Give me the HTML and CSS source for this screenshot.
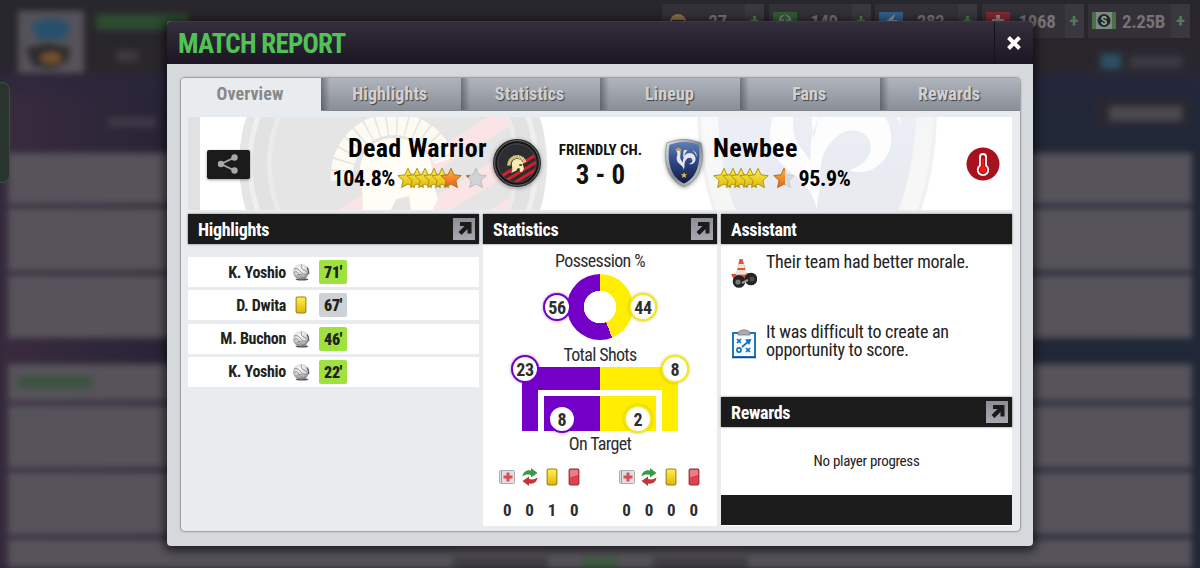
FILE: index.html
```html
<!DOCTYPE html>
<html>
	<head>
		<meta charset="UTF-8">
		<title>Match Report</title>
		<link rel="stylesheet" href="styles.css">
	</head>
	<body>
		<svg class="defs" width="0" height="0">
			<defs>
				<linearGradient id="gold" x1="0" y1="0" x2="0" y2="1"><stop offset="0" stop-color="#fff04a"/><stop offset="1" stop-color="#dfb80f"/></linearGradient>
				<linearGradient id="orange" x1="0" y1="0" x2="0" y2="1"><stop offset="0" stop-color="#ffb43c"/><stop offset="1" stop-color="#e2641c"/></linearGradient>
				<linearGradient id="blue" x1="0" y1="0" x2="0" y2="1"><stop offset="0" stop-color="#5f7fb8"/><stop offset=".5" stop-color="#2c4482"/><stop offset="1" stop-color="#101c40"/></linearGradient>
				<linearGradient id="silver" x1="0" y1="0" x2="1" y2="1"><stop offset="0" stop-color="#e8ebee"/><stop offset=".5" stop-color="#85898f"/><stop offset="1" stop-color="#d5d8dc"/></linearGradient>
				<radialGradient id="leather" cx=".45" cy=".3" r=".7"><stop offset="0" stop-color="#fff"/><stop offset=".6" stop-color="#d3d5d8"/><stop offset="1" stop-color="#77797d"/></radialGradient>
				<clipPath id="disc"><circle cx="24" cy="24" r="19"/></clipPath>
				<clipPath id="half"><rect x="0" y="0" width="12" height="22"/></clipPath>
				<path id="starShape" d="M11 .8l3 6.500 7.200.8-5.300 4.900 1.500 7.100-6.400-3.600-6.400 3.600 1.500-7.100L.8 8.100l7.200-.8z"/>
			</defs>
			<symbol id="warrior" viewBox="0 0 48 48">
				<circle cx="24" cy="24" r="24" fill="#2b2b2d"/>
				<circle cx="24" cy="24" r="22.300" fill="#151516" stroke="#77787a" stroke-width=".8"/>
				<circle cx="24" cy="24" r="19.300" fill="#2c2d2f" stroke="#5d5e60" stroke-width=".7"/>
				<g clip-path="url(#disc)" stroke="#d3202c" stroke-width="3">
					<path d="M4 40L46 14M9 44L50 19M16 47L52 25"/>
				</g>
				<path d="M16 26.500a8.200 8.200 0 0 1 16-3" fill="none" stroke="#efd98c" stroke-width="3.400" stroke-dasharray="1.300 .25"/>
				<path d="M19 27c-1-5 2.500-7.500 6-7 3.500.5 5.500 3 5 6l1 3.500-1.500 3-2.500.5-.5-4-2 .5-1 2-5.500 2.500c1.500-2 1.500-4 1-7z" fill="#f8ebb4"/>
				<path d="M26 25.500l3.500-.5-.8 1.800-2.200.3z" fill="#2c2d2f"/>
			</symbol>
			<symbol id="newbee" viewBox="0 0 38 48">
				<path d="M19 .5c6 0 11 1.400 17 3.500 2 8 2 18-1 27C32 39 26 45 19 47.500 12 45 6 39 3 31 0 22 0 12 2 4 8 1.900 13 .5 19 .5z" fill="url(#silver)" stroke="#777b80" stroke-width=".6"/>
				<path d="M19 3c5.500 0 10 1.200 14.500 2.800 1.500 7.500 1.300 16-1.300 24C29.500 37 25 42 19 44.500 13 42 8.500 37 5.800 29.800 3.200 21.800 3 13.300 4.500 5.800 9 4.200 13.500 3 19 3z" fill="url(#blue)"/>
				<path d="M11 10.500c3-2 5 0 4.500 2.500 0 4-1 6 1 8.500 2 2.500 3 4 2.500 9.500-1-4-3-4.500-5.500-7-3-3.500-1.500-6.500-1-9z" fill="#e6e8ee"/>
				<path d="M12 12l-2-2 2.500-.3.5-1.700 2 1.700 1.500.3-1 2z" fill="#c9a552"/>
				<path d="M18 22c0-5 3-8 7-8s6 4 5.500 7c-.5 3-3.500 5-6.500 4 3-1 4-3 3-5-2-2.500-5.500-1-7 2.500-1 3 0 5-1 7-1-2-1-4-1-7.500zM19 11c-1 3-1 7-.5 9 1-4 1.500-7 4-9zM27 11c3 1 5 3.500 5 7-1-3-2.500-5-5-7z" fill="#e6e8ee"/>
				<path d="M19 33l.9 2.200 2.400.1-1.900 1.500.7 2.300-2.100-1.300-2.100 1.300.7-2.300-1.900-1.500 2.400-.1z" fill="#e0b93f"/>
			</symbol>
			<symbol id="star" viewBox="0 0 22 22"><use href="#starShape" fill="url(#gold)" stroke="#a88a12" stroke-width=".9"/></symbol>
			<symbol id="starOrange" viewBox="0 0 22 22"><use href="#starShape" fill="url(#orange)" stroke="#b06a1c" stroke-width=".9"/></symbol>
			<symbol id="starEmpty" viewBox="0 0 22 22"><use href="#starShape" fill="#d3d2d6" stroke="#b9b8bd" stroke-width=".9"/><path d="M.8 8.100L5 7.600l-1.800 3z" fill="#b06a1c"/></symbol>
			<symbol id="starHalf" viewBox="0 0 22 22"><use href="#starShape" fill="#d5dadd" stroke="#c5cbd0" stroke-width=".9"/><g clip-path="url(#half)"><use href="#starShape" fill="url(#orange)" stroke="#b06a1c" stroke-width=".9"/></g></symbol>
			<symbol id="ball" viewBox="0 0 18 18">
				<ellipse cx="10" cy="16.300" rx="6.500" ry="1.200" fill="#555"/>
				<circle cx="9" cy="8.700" r="7.900" fill="url(#leather)"/>
				<path d="M2 6c3-1 5 0 6.500 2.500S12 12 15.500 11M9.500 1.500c-1 3 0 4.500 2.500 5.500s4 2 4.300 4M1.500 10c2-2 4-1.500 5 .5s2.500 4.500 6 4.500M5 12.500c2-1.500 4-1.500 6 0" fill="none" stroke="#85878b" stroke-width=".9"/>
				<path d="M15 4.500c1.700 2 2 4 1.700 6.500" fill="none" stroke="#4c6476" stroke-width="1.300"/>
			</symbol>
			<symbol id="yellow" viewBox="0 0 12 18"><rect x=".6" y=".6" width="10.800" height="16.800" rx="1.800" fill="#9a7a18"/><rect x="1.600" y="1.400" width="8.800" height="15" rx="1" fill="url(#gold)"/></symbol>
			<symbol id="red" viewBox="0 0 12 18"><rect x=".6" y=".6" width="10.800" height="16.800" rx="1.800" fill="#a02a35"/><rect x="1.600" y="1.400" width="8.800" height="15" rx="1" fill="#dd4254"/><path d="M2 2h8v5L2 9z" fill="#e8808a"/></symbol>
			<symbol id="injury" viewBox="0 0 16 16"><rect x=".5" y="1.500" width="15" height="13" rx="1" fill="#dfe0e3" stroke="#aaacb1"/><path d="M2.500 2v12" stroke="#999ba0"/><path d="M7.500 3.500h3v3h3v3h-3v3h-3v-3h-3v-3h3z" fill="#dd4b55"/></symbol>
			<symbol id="subs" viewBox="0 0 16 18"><path d="M.5 8.500C1 4 4.500 1.500 9 2.500V0l6.500 5L9 9.500V7C6 6 3.500 6.500.5 8.500z" fill="#3a9a47"/><path d="M15.500 9.500c-.5 4.500-4 7-8.500 6V18L.5 13 7 8.500V11c3 1 5.500.5 8.500-1.500z" fill="#c5343a"/></symbol>
			<symbol id="open" viewBox="0 0 22 22"><path d="M7 4h11.500v11.500h-4V11L8.500 17 5.500 14l6-6H7z" fill="#1b1b1b"/></symbol>
		</svg>

		<!-- page behind the dialog -->
		<div class="page">
			<div class="top">
				<svg class="team" viewBox="0 0 70 66"><rect width="70" height="66" fill="#55535a"/><path d="M14 14q20-12 42 0l-6 16H20z" fill="#28506c"/><path d="M8 40l24-6 24 6-4 14-16 8-20-4z" fill="#2c2a2c"/><ellipse cx="35" cy="50" rx="12" ry="7" fill="#75502f"/></svg>
				<div class="name">
					<i class="line green"></i>
					<i class="line arrow"></i>
					<i class="line text"></i>
				</div>
				<div class="side">
					<i class="btn"><b></b></i>
					<i class="btn plain"></i>
				</div>
			</div>
			<div class="rows">
				<i class="row first"></i>
				<i class="row"></i>
				<i class="row"></i>
				<i class="row title"><b></b></i>
				<i class="row"></i>
				<i class="row"></i>
				<i class="row last"><b></b><b class="g"></b><b></b></i>
			</div>
		</div>
		<div class="drawer"></div>
		<ul class="wallet">
			<li><svg viewBox="0 0 24 18"><circle cx="12" cy="10" r="8" fill="#8b7048"/><path d="M6 8h12v3h-4v6h-4v-6H6z" fill="#2b272b"/></svg><span>27</span><em>+</em></li>
			<li><svg viewBox="0 0 24 18"><rect width="24" height="17" fill="#315c33"/><circle cx="12" cy="9" r="6.500" fill="#768178"/><path d="M12 4v10M9 7l3-3 3 3" stroke="#315c33" stroke-width="2" fill="none"/></svg><span>149</span><em>+</em></li>
			<li><svg viewBox="0 0 24 18"><rect width="24" height="17" fill="#315f8a"/><path d="M16 2L6 10h5l-2 6 10-8h-5z" fill="#8b98a4"/></svg><span>282</span><em>+</em></li>
			<li><svg viewBox="0 0 24 18"><rect width="24" height="17" fill="#7f292f"/><path d="M10 3h4v4h4v4h-4v4h-4v-4H6V7h4z" fill="#978689"/></svg><span>1968</span><em>+</em></li>
			<li><svg viewBox="0 0 24 18"><rect width="24" height="17" fill="#496f4c"/><rect x="4" width="16" height="17" fill="#7c8b7f"/><circle cx="12" cy="8.500" r="6.500" fill="#20282a"/><text x="12" y="12.700" text-anchor="middle" font-size="12" font-weight="bold" fill="#98a49b">S</text></svg><span>2.25B</span><em>+</em></li>
		</ul>

		<div class="dialog">
			<div class="bar">
				<h1>MATCH REPORT</h1>
				<div class="close"><svg width="16" height="16" viewBox="0 0 16 16"><path d="M2.500 2.500l11 11M13.500 2.500l-11 11" stroke="#fff" stroke-width="4"/></svg></div>
			</div>
			<div class="panel">
				<ul class="tabs">
					<li class="active">Overview</li>
					<li>Highlights</li>
					<li>Statistics</li>
					<li>Lineup</li>
					<li>Fans</li>
					<li>Rewards</li>
				</ul>
				<div class="content">
					<div class="match">
						<svg class="mark mark1"><use href="#warrior"/></svg>
						<svg class="mark mark2"><use href="#newbee"/></svg>
						<div class="share"><svg width="22" height="20" viewBox="0 0 22 20"><path d="M17.500 3.500L4 10l13.500 6.500" fill="none" stroke="#aaa" stroke-width="1.800"/><circle cx="17.500" cy="3.500" r="3.200" fill="#aaa"/><circle cx="4" cy="10" r="3.200" fill="#aaa"/><circle cx="17.500" cy="16.500" r="3.200" fill="#aaa"/></svg></div>
						<div class="club home">
							<h2>Dead Warrior</h2>
							<div class="rate">
								<span>104.8%</span>
								<div class="stars">
									<svg><use href="#star"/></svg><svg><use href="#star"/></svg><svg><use href="#star"/></svg><svg><use href="#star"/></svg><svg><use href="#star"/></svg><svg><use href="#starOrange"/></svg><svg class="apart"><use href="#starEmpty"/></svg>
								</div>
							</div>
						</div>
						<svg class="crest round"><use href="#warrior"/></svg>
						<div class="score">
							<p>FRIENDLY CH.</p>
							<strong>3 - 0</strong>
						</div>
						<svg class="crest shield"><use href="#newbee"/></svg>
						<div class="club away">
							<h2>Newbee</h2>
							<div class="rate">
								<div class="stars">
									<svg><use href="#star"/></svg><svg><use href="#star"/></svg><svg><use href="#star"/></svg><svg><use href="#star"/></svg><svg><use href="#star"/></svg><svg class="apart"><use href="#starHalf"/></svg>
								</div>
								<span>95.9%</span>
							</div>
						</div>
						<div class="temp"><svg width="34" height="34" viewBox="0 0 34 34"><circle cx="17" cy="17" r="16.500" fill="#a81220"/><path d="M14 18.500V10a3 3 0 0 1 6 0v8.500a5.300 5.300 0 1 1-6 0z" fill="#a81220" stroke="#fff" stroke-width="1.800"/><circle cx="17" cy="22.500" r="3.300" fill="#ff1414"/><path d="M17 12v9" stroke="#ff1414" stroke-width="2"/></svg></div>
					</div>

					<div class="cols">
						<div class="col events">
							<h3>Highlights<span class="open"><svg><use href="#open"/></svg></span></h3>
							<ul>
								<li><p>K. Yoshio</p><svg class="ball"><use href="#ball"/></svg><b>71'</b></li>
								<li><p>D. Dwita</p><svg class="card"><use href="#yellow"/></svg><b class="grey">67'</b></li>
								<li><p>M. Buchon</p><svg class="ball"><use href="#ball"/></svg><b>46'</b></li>
								<li><p>K. Yoshio</p><svg class="ball"><use href="#ball"/></svg><b>22'</b></li>
							</ul>
						</div>

						<div class="col stats">
							<h3>Statistics<span class="open"><svg><use href="#open"/></svg></span></h3>
							<p class="label">Possession %</p>
							<div class="possession">
								<span class="num purple">56</span>
								<div class="donut"></div>
								<span class="num gold">44</span>
							</div>
							<p class="label shots">Total Shots</p>
							<div class="goal">
								<div class="inner"></div>
								<span class="num purple n1">23</span>
								<span class="num gold n2">8</span>
								<span class="num purple n3">8</span>
								<span class="num gold n4">2</span>
							</div>
							<p class="label target">On Target</p>
							<div class="counts">
								<ul>
									<li><svg><use href="#injury"/></svg>0</li>
									<li><svg><use href="#subs"/></svg>0</li>
									<li><svg><use href="#yellow"/></svg>1</li>
									<li><svg><use href="#red"/></svg>0</li>
								</ul>
								<ul>
									<li><svg><use href="#injury"/></svg>0</li>
									<li><svg><use href="#subs"/></svg>0</li>
									<li><svg><use href="#yellow"/></svg>0</li>
									<li><svg><use href="#red"/></svg>0</li>
								</ul>
							</div>
						</div>

						<div class="col notes">
							<h3>Assistant</h3>
							<div class="tips">
								<div class="tip">
									<svg width="26" height="30" viewBox="0 0 26 30"><path d="M0 15l18-1 5 3-8 5-12-1z" fill="#d8552f"/><path d="M8.500 0h3L16 16H5z" fill="#e0562f"/><path d="M7.700 5h5l1.200 4H6.500zM5.700 11h9l1 4.500-11 .2z" fill="#e9e3df"/><circle cx="8" cy="22.500" r="6.300" fill="#242426"/><circle cx="20" cy="20" r="6.300" fill="#242426"/><circle cx="7" cy="23" r="2.600" fill="#77787b"/><circle cx="21" cy="20" r="2.500" fill="#4d4e51"/><path d="M11 24l6-3" stroke="#999" stroke-width="2"/></svg>
									<p>Their team had better morale.</p>
								</div>
								<div class="tip">
									<svg width="26" height="30" viewBox="0 0 26 30"><rect x="2" y="4" width="22" height="24" fill="#f4fafd" stroke="#2277b8" stroke-width="2"/><path d="M1 28.500h24" stroke="#154f80" stroke-width="1.500"/><path d="M7 6V3q6-4.500 12 0v3z" fill="#a9adb1" stroke="#6f7478" stroke-width=".7"/><path d="M6 10l4 4m0-4l-4 4M15 19l4 4m0-4l-4 4M11 18l7-6" stroke="#1470ba" stroke-width="1.700"/><path d="M14 10.500l6.500-.5-2.500 6z" fill="#1470ba"/><circle cx="8" cy="21" r="2.100" fill="none" stroke="#1470ba" stroke-width="1.600"/></svg>
									<p>It was difficult to create an opportunity to score.</p>
								</div>
							</div>
							<h3 class="second">Rewards<span class="open"><svg><use href="#open"/></svg></span></h3>
							<p class="none">No player progress</p>
							<div class="foot"></div>
						</div>
					</div>
				</div>
			</div>
		</div>
	</body>
</html>
```

FILE: styles.css
```css
*{margin:0;padding:0;box-sizing:border-box;}
body{
	width:1200px;
	height:568px;
	overflow:hidden;
	position:relative;
	background:#252936;
	font-family:"Liberation Sans Narrow","Roboto Condensed","Liberation Sans",sans-serif;
}
ul{list-style:none;}
i,em{font-style:normal;}
svg{display:block;flex:none;}
.defs{position:absolute;}

/* page behind */
.page{
	width:1200px;
	height:568px;
	overflow:hidden;
	filter:blur(3px);
	background:linear-gradient(90deg,#3a2b3e 0,#292537 12%,#242837 60%,#202737 100%);
}
.top{
	height:153px;
	padding:10px 8px 0 18px;
	display:flex;
	background:linear-gradient(#29262b 0,#29262b 68px,rgba(42,38,62,.6) 78px,rgba(42,38,62,0) 110px);
}
.team{width:66px;height:64px;}
.name{margin-left:12px;}
.line{display:block;}
.green{width:92px;height:16px;margin-top:4px;background:#2c4b30;}
.arrow{width:22px;height:12px;margin:20px 0 0 20px;background:#3c393f;}
.text{width:48px;height:10px;margin:55px 0 0 12px;background:#3d3845;}
.side{margin:37px 0 0 auto;}
.btn{
	display:flex;
	align-items:center;
	width:97px;
	height:29px;
	margin-bottom:23px;
	padding:6px;
	background:#292832;
}
.btn b{width:20px;height:15px;background:#2c4f64;}
.btn:after{content:"";flex:1;height:12px;margin:0 4px 0 8px;background:#3b393f;}
.plain:after{height:15px;background:#4b494e;}
.rows{margin:0 8px;}
.row{display:block;height:63px;margin-bottom:4px;background:#56535a;}
.first{height:51px;}
.title{height:37px;margin-top:26px;padding:12px 10px;}
.title b{display:block;width:74px;height:12px;background:#3b533f;}
.last{display:flex;justify-content:center;gap:35px;padding-top:18px;}
.last b{width:95px;height:12px;background:#403c43;}
.last .g{width:35px;background:#3c5b3c;}
.drawer{
	position:absolute;
	left:-6px;
	top:82px;
	width:16px;
	height:101px;
	border:1px solid #36543f;
	border-radius:8px;
	background:#29342f;
}
.wallet{
	position:absolute;
	top:4px;
	left:662px;
	display:flex;
	gap:4.500px;
	color:#767278;
	font-size:19px;
	font-weight:bold;
}
.wallet li{
	display:flex;
	align-items:center;
	width:102px;
	height:34px;
	padding-left:4px;
	background:#333037;
}
.wallet svg{width:24px;height:18px;}
.wallet span{flex:1;text-align:center;letter-spacing:-.4px;}
.wallet em{
	width:19px;
	height:34px;
	line-height:33px;
	text-align:center;
	background:#3a373e;
	color:#4b8154;
}

/* dialog */
.dialog{
	position:absolute;
	left:167px;
	top:21px;
	width:866px;
	height:525px;
	background:#d5d9dc;
	border-radius:4px;
	box-shadow:0 2px 10px 3px rgba(0,0,0,.6);
}
.bar{
	display:flex;
	height:43px;
	border-radius:4px 4px 0 0;
	border-top:1px solid #3c3845;
	background:linear-gradient(#342e3d,#1c1523);
}
.bar h1{
	flex:1;
	padding-left:11px;
	line-height:44px;
	font-size:27px;
	letter-spacing:-.75px;
	color:#4fc455;
}
.close{
	width:39px;
	display:flex;
	align-items:center;
	justify-content:center;
	border-left:1px solid #15101a;
}
.panel{
	width:841px;
	height:455px;
	margin:13px 0 0 13px;
	border:1px solid #9ea3a8;
	border-radius:5px;
	background:#e8ecee;
	box-shadow:0 0 2px #a3a7aa;
	overflow:hidden;
}
.tabs{display:flex;height:33px;}
.tabs li{
	width:140px;
	line-height:32px;
	padding-right:2px;
	text-align:center;
	font-size:18px;
	font-weight:bold;
	letter-spacing:.1px;
	color:#d0d1d3;
	text-shadow:1px 1px 1px #3f4247;
	background:linear-gradient(90deg,rgba(50,54,62,.5) 0,rgba(50,54,62,0) 9px),linear-gradient(#b0b5bd,#8a8e96);
	border-bottom:1px solid #82868d;
}
.tabs .active{
	background:#e8ecee;
	border-color:#e8ecee;
	color:#87888a;
	text-shadow:none;
}
.content{padding:6px 8px 0 7px;}

.match{
	position:relative;
	overflow:hidden;
	display:flex;
	height:93px;
	background:#fff;
	border-left:12px solid #e0e1e2;
}
.mark{position:absolute;}
.mark1{left:39px;top:-107px;width:308px;height:308px;opacity:.12;}
.mark2{left:494px;top:-107px;width:246px;height:308px;opacity:.1;}
.share{
	position:relative;
	width:43px;
	height:29px;
	margin:33px 0 0 7px;
	padding:4px 10px;
	border-radius:2px;
	background:#1b1b1b;
	box-shadow:0 1px 3px rgba(0,0,0,.4);
}
.club{position:relative;color:#000;}
.club h2{font-size:26px;line-height:30px;margin-top:16px;letter-spacing:.35px;white-space:nowrap;}
.home{width:237px;}
.home h2{text-align:right;}
.rate{display:flex;align-items:center;height:30px;font-size:22px;font-weight:bold;letter-spacing:-.4px;}
.home .rate{justify-content:flex-end;}
.home span{margin-right:2px;}
.stars{display:flex;}
.stars svg{width:22px;height:23px;margin-right:-13.500px;}
.stars svg:last-child{margin-right:0;}
.stars .apart{margin-left:17px;}
.crest{position:relative;height:48px;margin-top:22px;filter:drop-shadow(0 1px 2px rgba(0,0,0,.4));}
.round{width:48px;margin-left:6px;}
.shield{width:38px;}
.score{
	position:relative;
	width:124px;
	padding:25px 5px 0 0;
	text-align:center;
	color:#111;
}
.score p{font-size:15px;line-height:17px;font-weight:bold;}
.score strong{display:block;font-size:27px;line-height:32px;}
.away{flex:1;margin-left:10px;}
.away span{margin-left:4px;}
.temp{position:relative;margin:30px 12px 0 0;}

.cols{display:flex;gap:4px;margin-top:4px;}
.col{width:291px;height:312px;background:#fff;}
.events{background:none;}
.stats{width:234px;}
h3{
	display:flex;
	align-items:center;
	height:30px;
	padding:0 4px 0 10px;
	background:#1b1b1b;
	color:#fff;
	font-size:18px;
	letter-spacing:-.3px;
	box-shadow:0 0 2px #666;
}
.open{
	width:22px;
	height:22px;
	margin-left:auto;
	background:linear-gradient(#8d8e95,#a8a9b0);
}
.open svg{width:22px;height:22px;}
.events ul{padding-top:13px;}
.events li{
	display:flex;
	align-items:center;
	height:30px;
	margin-bottom:3.300px;
	background:#fff;
	color:#222;
	font-size:16px;
	font-weight:bold;
	letter-spacing:-.3px;
}
.events p{width:98px;text-align:right;}
.events li svg{width:18px;height:18px;margin:0 9px 0 6px;}
.events b{
	width:28px;
	height:24px;
	line-height:25px;
	text-align:center;
	border-radius:2px;
	background:#9fe13f;
}
.events .grey{background:#ccd2d6;}

.stats{color:#2d2d2f;}
.label{padding-top:7px;font-size:18px;line-height:20px;letter-spacing:-.65px;text-align:center;}
.possession{display:flex;justify-content:center;align-items:center;height:71px;}
.donut{
	width:66px;
	height:66px;
	border-radius:50%;
	background:radial-gradient(#fff 16px,transparent 16.500px),conic-gradient(#ffee00 0 44%,#7400c8 44% 100%);
}
.num{
	position:relative;
	width:28px;
	height:28px;
	line-height:25px;
	text-align:center;
	border:2px solid #7400c8;
	border-radius:50%;
	background:#fff;
	font-size:18px;
	font-weight:bold;
	letter-spacing:-.3px;
	box-shadow:0 0 3px rgba(116,0,200,.5);
}
.gold{border-color:#f5e81c;box-shadow:0 0 3px rgba(170,160,0,.7);}
.possession .purple{margin-right:-4px;}
.possession .gold{margin-left:-4px;}
.shots{padding-top:3px;}
.goal{
	position:relative;
	width:156px;
	height:64px;
	margin:2px auto 0;
	padding:23px 16px 0 16px;
	background:linear-gradient(90deg,#7400c8 50%,#ffee00 50%);
}
.inner{
	height:41px;
	border:solid #fff;
	border-width:6px 6px 0;
}
.goal .num{position:absolute;}
.n1{left:-11px;top:-12px;}
.n2{right:-11px;top:-12px;}
.n3{left:26px;top:38px;}
.n4{left:102px;top:38px;}
.target{padding-top:3px;}
.counts{display:flex;justify-content:space-between;padding:14px 12px 0 13px;}
.counts ul{display:flex;}
.counts li{
	width:22.400px;
	text-align:center;
	font-size:17px;
	line-height:20px;
	font-weight:bold;
}
.counts svg{width:16px;height:18px;margin:0 auto 14px;}

.notes{color:#222;}
.tips{height:153px;padding-top:9px;}
.tip{display:flex;height:70px;font-size:18px;line-height:18px;letter-spacing:-.25px;}
.tip svg{margin:6px 9px 0 10px;}
.tip p{width:215px;}
.none{height:68px;line-height:68px;text-align:center;font-size:15px;letter-spacing:-.3px;}
.foot{height:30px;background:#1b1b1b;}
```
